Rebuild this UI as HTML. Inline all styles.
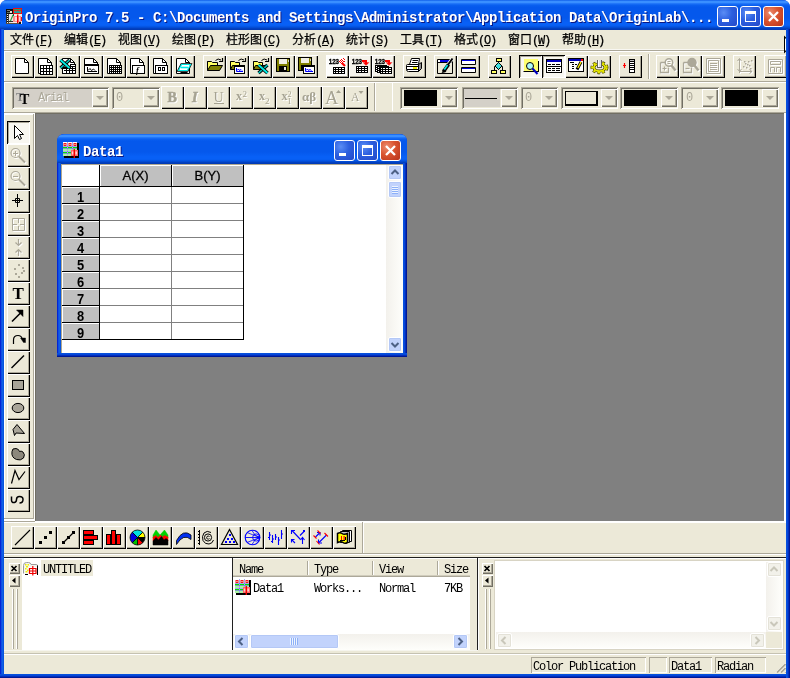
<!DOCTYPE html>
<html lang="zh">
<head>
<meta charset="utf-8">
<title>OriginPro 7.5</title>
<style>
*{margin:0;padding:0;box-sizing:border-box}
html,body{width:790px;height:678px;overflow:hidden;background:#fff}
body{position:relative;font-family:"Liberation Mono","Noto Sans CJK SC",monospace;font-size:12px;color:#000}
.a{position:absolute}
#root{position:absolute;left:0;top:0;width:790px;height:678px;will-change:transform}
#frame{position:absolute;left:0;top:0;width:790px;height:678px;background:#0831D9;border-radius:7px 7px 0 0}
#frameL{left:0;top:29px;width:4px;height:649px;background:linear-gradient(90deg,#0019CF 0,#0831D9 1px,#166AEE 2px,#0855DD 3px,#0855DD 4px)}
#frameR{z-index:5;left:786px;top:29px;width:4px;height:649px;background:linear-gradient(90deg,#0855DD 0,#0441D8 2px,#001DA0 3px,#00138C 4px)}
#frameB{left:0;top:674px;width:790px;height:4px;background:linear-gradient(180deg,#0855DD 0,#0441D8 2px,#001DA0 3px,#00138C 4px)}
.tgrad{background:linear-gradient(180deg,#0A58E6 0,#3A8FFF 4%,#3A8FFF 9%,#1F74F8 12%,#0A60F0 17%,#0558EC 24%,#0558EC 60%,#0860F6 75%,#0860F6 84%,#0452DE 90%,#0240C0 95%,#0238B0 100%)}
#title{left:0;top:0;width:790px;height:30px;border-radius:7px 7px 0 0}
.cap{color:#fff;font-weight:bold;font-size:14px;letter-spacing:-0.4px;white-space:pre;line-height:16px;margin-top:1px;text-shadow:1px 1px 0 #0A1883}
.wb{width:21px;height:21px;border:1px solid #fff;border-radius:3px;background:radial-gradient(circle at 30% 30%,#5A8DF5 0,#2C5FDF 45%,#2448C8 100%)}
.wb.x{background:radial-gradient(circle at 30% 30%,#EC8D6F 0,#D9532F 45%,#B7331A 100%)}
#menu{left:4px;top:30px;width:782px;height:20px;background:#ECE9D8}
.mi{position:absolute;top:3px;height:14px;line-height:14px;font-size:12px;white-space:pre;-webkit-text-stroke:0.25px #000;font-family:"Liberation Sans","Noto Sans CJK SC","WenQuanYi Zen Hei",sans-serif}
.mi u{text-decoration:underline;text-underline-offset:1px}
.mi i{font-style:normal;font-family:"Liberation Mono",monospace;letter-spacing:-1.2px;font-size:12px}
.m{position:absolute;font-family:"Liberation Mono",monospace;font-size:12px;letter-spacing:-1.2px;white-space:pre;line-height:12px}
.btn{position:absolute;width:23px;height:23px;box-shadow:inset 1px 1px 0 #fff,inset -1px -1px 0 #000,inset -2px -2px 0 #ACA899;background:#ECE9D8}
.btn svg{position:absolute;left:0;top:0;width:23px;height:23px}
.btn.dn{box-shadow:inset 1px 1px 0 #000,inset -1px -1px 0 #fff,inset 2px 2px 0 #ACA899;background:#F8F7F1}
.btn.dn svg{left:1px;top:1px}
.combo{position:absolute;height:22px;box-shadow:inset 1px 1px 0 #ACA899,inset -1px -1px 0 #fff,inset 2px 2px 0 #716F64,inset -2px -2px 0 #ECE9D8;background:#ECE9D8}
.dd{position:absolute;right:1px;top:2px;width:16px;height:18px;box-shadow:inset 1px 1px 0 #fff,inset -1px -1px 0 #716F64,inset -2px -2px 0 #ACA899;background:#ECE9D8}
.dd:after{content:"";position:absolute;left:4px;top:7px;border-left:4px solid transparent;border-right:4px solid transparent;border-top:4px solid #ACA899}
.sw{position:absolute;left:4px;top:3px;height:16px;background:#000}
.hl{position:absolute;height:1px}
.vl{position:absolute;width:1px}
</style>
</head>
<body>
<div id="root">
<div id="frame"></div><div id="title" class="a tgrad"></div><div id="frameL" class="a"></div><div id="frameR" class="a"></div><div id="frameB" class="a"></div><div class="a" style="left:4px;top:30px;width:782px;height:644px;background:#ECE9D8"></div>
<svg class="a" style="left:6px;top:8px" width="16" height="16" viewBox="0 0 16 16"><rect x="0" y="6" width="16" height="10" fill="#F4ECE6"/><rect x="0" y="1" width="7" height="5" fill="#101010"/><rect x="1" y="2" width="3" height="1" fill="#808080"/><rect x="4" y="3" width="2" height="2" fill="#E8E0D8"/><rect x="1" y="4" width="3" height="1" fill="#607060"/><rect x="7" y="0" width="9" height="6" fill="#F01010"/><rect x="8" y="1" width="7" height="1.4" fill="#18A070"/><rect x="8" y="3" width="7" height="2" fill="#18A8A0"/><rect x="9.5" y="2" width="1.5" height="1.5" fill="#E03030"/><rect x="12.5" y="2" width="1.5" height="1.5" fill="#E03030"/><rect x="0" y="6" width="1" height="10" fill="#303030"/><rect x="1" y="7" width="1" height="1" fill="#000"/><rect x="1" y="9" width="1" height="1" fill="#000"/><rect x="1" y="11" width="1" height="1" fill="#000"/><rect x="1" y="13" width="1" height="1" fill="#000"/><rect x="2" y="6" width="1" height="9" fill="#404040"/><path d="M4 14L7 7" stroke="#30A040" stroke-width="1.2"/><rect x="3" y="13" width="4" height="1" fill="#303030"/><rect x="7" y="8" width="8" height="6" fill="#F89090"/><rect x="9" y="9" width="2" height="4" fill="#F8D8D8"/><rect x="13" y="9" width="1" height="4" fill="#F8D8D8"/><rect x="11" y="6.5" width="1.4" height="9" fill="#F00000"/><rect x="15" y="9" width="1" height="4" fill="#F01010"/><rect x="7" y="6" width="1" height="2" fill="#206040"/><rect x="13" y="14" width="2" height="2" fill="#101010"/><rect x="0" y="15" width="13" height="1" fill="#605040"/></svg>
<div class="a cap" style="left:25px;top:9px">OriginPro 7.5 - C:\Documents and Settings\Administrator\Application Data\OriginLab\...</div>
<div class="a wb" style="left:717px;top:6px"><div class="a" style="left:4px;top:12px;width:7px;height:3px;background:#fff"></div></div>
<div class="a wb" style="left:740px;top:6px"><div class="a" style="left:4px;top:4px;width:11px;height:11px;border:1px solid #fff;border-top-width:3px"></div></div>
<div class="a wb x" style="left:763px;top:6px"><svg class="a" style="left:0;top:0" width="19" height="19"><path d="M5 5L14 14M14 5L5 14" stroke="#fff" stroke-width="2.3"/></svg></div>
<div id="menu" class="a">
<div class="mi" style="left:6px">文件<i>(<u>F</u>)</i></div>
<div class="mi" style="left:60px">编辑<i>(<u>E</u>)</i></div>
<div class="mi" style="left:114px">视图<i>(<u>V</u>)</i></div>
<div class="mi" style="left:168px">绘图<i>(<u>P</u>)</i></div>
<div class="mi" style="left:222px">柱形图<i>(<u>C</u>)</i></div>
<div class="mi" style="left:288px">分析<i>(<u>A</u>)</i></div>
<div class="mi" style="left:342px">统计<i>(<u>S</u>)</i></div>
<div class="mi" style="left:396px">工具<i>(<u>T</u>)</i></div>
<div class="mi" style="left:450px">格式<i>(<u>O</u>)</i></div>
<div class="mi" style="left:504px">窗口<i>(<u>W</u>)</i></div>
<div class="mi" style="left:558px">帮助<i>(<u>H</u>)</i></div>
</div>
<div class="hl" style="left:4px;top:49px;width:782px;background:#F8F7F2"></div>
<div class="hl" style="left:4px;top:50px;width:782px;background:#ACA899"></div>
<div class="hl" style="left:4px;top:51px;width:782px;background:#fff"></div>
<div class="vl" style="left:4px;top:51px;height:62px;background:#fff"></div>
<div class="hl" style="left:4px;top:81px;width:782px;background:#ACA899"></div>
<div class="hl" style="left:4px;top:82px;width:782px;background:#fff"></div>
<div class="hl" style="left:4px;top:112px;width:782px;background:#ACA899"></div>
<div class="btn " style="left:11px;top:55px"><svg viewBox="0 0 23 23"><path d="M4.5 3.5H13.5L17.5 7.5V18.5H4.5Z" stroke="#000" fill="#fff" stroke-width="1" /><path d="M13.5 3.5V7.5H17.5" stroke="#000" fill="none" stroke-width="1" /></svg></div>
<div class="btn " style="left:34px;top:55px"><svg viewBox="0 0 23 23"><path d="M4.5 3.5H13.5L17.5 7.5V18.5H4.5Z" stroke="#000" fill="#fff" stroke-width="1" /><path d="M13.5 3.5V7.5H17.5" stroke="#000" fill="none" stroke-width="1" /><rect x="6" y="10" width="13" height="10" fill="#000"/><rect x="7" y="11" width="2" height="2" fill="#fff"/><rect x="10" y="11" width="2" height="2" fill="#fff"/><rect x="13" y="11" width="2" height="2" fill="#fff"/><rect x="16" y="11" width="2" height="2" fill="#fff"/><rect x="7" y="14" width="2" height="2" fill="#fff"/><rect x="10" y="14" width="2" height="2" fill="#fff"/><rect x="13" y="14" width="2" height="2" fill="#fff"/><rect x="16" y="14" width="2" height="2" fill="#fff"/><rect x="7" y="17" width="2" height="2" fill="#fff"/><rect x="10" y="17" width="2" height="2" fill="#fff"/><rect x="13" y="17" width="2" height="2" fill="#fff"/><rect x="16" y="17" width="2" height="2" fill="#fff"/></svg></div>
<div class="btn " style="left:57px;top:55px"><svg viewBox="0 0 23 23"><path d="M5.5 3.5H13.5L17.5 7.5V18.5H5.5Z" stroke="#000" fill="#fff" stroke-width="1" /><path d="M13.5 3.5V7.5H17.5" stroke="#000" fill="none" stroke-width="1" /><rect x="5" y="12" width="13" height="7" fill="#000"/><rect x="6" y="13" width="2" height="2" fill="#fff"/><rect x="9" y="13" width="2" height="2" fill="#fff"/><rect x="12" y="13" width="2" height="2" fill="#fff"/><rect x="15" y="13" width="2" height="2" fill="#fff"/><rect x="6" y="16" width="2" height="2" fill="#fff"/><rect x="9" y="16" width="2" height="2" fill="#fff"/><rect x="12" y="16" width="2" height="2" fill="#fff"/><rect x="15" y="16" width="2" height="2" fill="#fff"/><rect x="5" y="12" width="14" height="7" fill="#000"/><rect x="7" y="14" width="2" height="1" fill="#fff"/><rect x="7" y="16" width="2" height="2" fill="#fff"/><rect x="10" y="14" width="2" height="1" fill="#fff"/><rect x="10" y="16" width="2" height="2" fill="#fff"/><rect x="13" y="14" width="2" height="1" fill="#fff"/><rect x="13" y="16" width="2" height="2" fill="#fff"/><rect x="16" y="14" width="2" height="1" fill="#fff"/><rect x="16" y="16" width="2" height="2" fill="#fff"/><rect x="6" y="14" width="1" height="4" fill="#fff"/><rect x="13" y="9" width="6" height="4" fill="#000"/><rect x="14" y="10" width="4" height="1" fill="#fff"/><rect x="14" y="12" width="1" height="1" fill="#fff"/><rect x="16" y="12" width="2" height="1" fill="#fff"/><path d="M12.5 5L3.5 13" stroke="#000" fill="none" stroke-width="3.4" /><path d="M12.5 5L3.5 13" stroke="#00C8C0" fill="none" stroke-width="1.6" /><path d="M3.5 5L12.5 13" stroke="#000" fill="none" stroke-width="3.6" /><path d="M3.5 5L12.5 13" stroke="#00F0E8" fill="none" stroke-width="1.8" /></svg></div>
<div class="btn " style="left:80px;top:55px"><svg viewBox="0 0 23 23"><path d="M4.5 3.5H13.5L17.5 7.5V18.5H4.5Z" stroke="#000" fill="#fff" stroke-width="1" /><path d="M13.5 3.5V7.5H17.5" stroke="#000" fill="none" stroke-width="1" /><rect x="4" y="9" width="15" height="10" fill="#000"/><rect x="5" y="11" width="13" height="7" fill="#fff"/><path d="M7.5 12V16.5H17" stroke="#000" fill="none" stroke-width="1" /><path d="M8 15.5L10 13.5L11.5 15.5L13.5 14L15 15.5" stroke="#000" fill="none" stroke-width="1" /></svg></div>
<div class="btn " style="left:103px;top:55px"><svg viewBox="0 0 23 23"><path d="M4.5 3.5H13.5L17.5 7.5V18.5H4.5Z" stroke="#000" fill="#fff" stroke-width="1" /><path d="M13.5 3.5V7.5H17.5" stroke="#000" fill="none" stroke-width="1" /><rect x="6" y="10" width="13" height="9" fill="#000"/><rect x="7" y="11" width="1" height="1" fill="#fff"/><rect x="9" y="11" width="1" height="1" fill="#fff"/><rect x="11" y="11" width="1" height="1" fill="#fff"/><rect x="13" y="11" width="1" height="1" fill="#fff"/><rect x="15" y="11" width="1" height="1" fill="#fff"/><rect x="17" y="11" width="1" height="1" fill="#fff"/><rect x="7" y="13" width="1" height="1" fill="#fff"/><rect x="9" y="13" width="1" height="1" fill="#fff"/><rect x="11" y="13" width="1" height="1" fill="#fff"/><rect x="13" y="13" width="1" height="1" fill="#fff"/><rect x="15" y="13" width="1" height="1" fill="#fff"/><rect x="17" y="13" width="1" height="1" fill="#fff"/><rect x="7" y="15" width="1" height="1" fill="#fff"/><rect x="9" y="15" width="1" height="1" fill="#fff"/><rect x="11" y="15" width="1" height="1" fill="#fff"/><rect x="13" y="15" width="1" height="1" fill="#fff"/><rect x="15" y="15" width="1" height="1" fill="#fff"/><rect x="17" y="15" width="1" height="1" fill="#fff"/><rect x="7" y="17" width="1" height="1" fill="#fff"/><rect x="9" y="17" width="1" height="1" fill="#fff"/><rect x="11" y="17" width="1" height="1" fill="#fff"/><rect x="13" y="17" width="1" height="1" fill="#fff"/><rect x="15" y="17" width="1" height="1" fill="#fff"/><rect x="17" y="17" width="1" height="1" fill="#fff"/></svg></div>
<div class="btn " style="left:126px;top:55px"><svg viewBox="0 0 23 23"><path d="M4.5 3.5H13.5L17.5 7.5V18.5H4.5Z" stroke="#000" fill="#fff" stroke-width="1" /><path d="M13.5 3.5V7.5H17.5" stroke="#000" fill="none" stroke-width="1" /><rect x="6" y="10" width="13" height="9" fill="#000"/><rect x="7" y="11" width="11" height="7" fill="#fff"/><text x="10" y="17.5" font-family="Liberation Serif, sans-serif" font-size="8.5" font-weight="bold" fill="#000" font-style="italic">f</text></svg></div>
<div class="btn " style="left:149px;top:55px"><svg viewBox="0 0 23 23"><path d="M4.5 3.5H13.5L17.5 7.5V18.5H4.5Z" stroke="#000" fill="#fff" stroke-width="1" /><path d="M13.5 3.5V7.5H17.5" stroke="#000" fill="none" stroke-width="1" /><rect x="6" y="10" width="13" height="9" fill="#000"/><rect x="7" y="11" width="11" height="7" fill="#fff"/><rect x="9" y="12" width="3" height="4" fill="#000"/><rect x="10" y="13" width="1" height="2" fill="#fff"/><rect x="13" y="12" width="3" height="4" fill="#000"/><rect x="14" y="13" width="1" height="2" fill="#fff"/></svg></div>
<div class="btn " style="left:172px;top:55px"><svg viewBox="0 0 23 23"><path d="M4.5 3.5H13.5L17.5 7.5V18.5H4.5Z" stroke="#000" fill="#fff" stroke-width="1" /><path d="M13.5 3.5V7.5H17.5" stroke="#000" fill="none" stroke-width="1" /><path d="M9.5 9.5H18.5L15.5 15.5H6.5Z" stroke="#000" fill="#fff" stroke-width="2.4" /><path d="M9.5 9.5H18.5L15.5 15.5H6.5Z" stroke="#00E8E8" fill="#fff" stroke-width="1.2" /><path d="M9 12.5H16" stroke="#00E8E8" fill="none" stroke-width="1.6" /><path d="M8.5 17.5H15.5" stroke="#000" fill="none" stroke-width="1" /></svg></div>
<div class="btn " style="left:203px;top:55px"><svg viewBox="0 0 23 23"><path d="M4.5 8.5V6.5H8.5L9.5 7.5H14.5V10.5" stroke="#000" fill="#FFFF60" stroke-width="1" /><rect x="5" y="8" width="9" height="7" fill="#FFFF60"/><path d="M4.5 6.5V15.5" stroke="#000" fill="none" stroke-width="1" /><path d="M4.5 15.5L7.5 10.5H19.5L16.5 15.5Z" stroke="#000" fill="#808000" stroke-width="1" /><path d="M12.5 5.5Q15 2.8 18 5" stroke="#000" fill="none" stroke-width="1" /><path d="M16 6.5H19.5V3" stroke="#000" fill="none" stroke-width="1.2" /></svg></div>
<div class="btn " style="left:226px;top:55px"><svg viewBox="0 0 23 23"><path d="M4.5 8.5V6.5H8.5L9.5 7.5H13.5V10.5" stroke="#000" fill="#FFFF60" stroke-width="1" /><rect x="5" y="8" width="8" height="6" fill="#FFFF60"/><path d="M4.5 6.5V14.5" stroke="#000" fill="none" stroke-width="1" /><path d="M4.5 14.5L6.5 10.5H16.5L14.5 14.5Z" stroke="#000" fill="#808000" stroke-width="1" /><path d="M12.5 5.5Q15 2.8 18 5" stroke="#000" fill="none" stroke-width="1" /><path d="M16 6.5H19.5V3" stroke="#000" fill="none" stroke-width="1.2" /><rect x="8" y="10" width="11" height="9" fill="#000"/><rect x="9" y="12" width="9" height="6" fill="#fff"/><path d="M10.5 13V16.5H17" stroke="#00F" fill="none" stroke-width="1" /><path d="M11 15.5L12.5 14L13.5 15.5L15 14.5L16 15.5" stroke="#00F" fill="none" stroke-width="1" /></svg></div>
<div class="btn " style="left:249px;top:55px"><svg viewBox="0 0 23 23"><path d="M4.5 8.5V6.5H8.5L9.5 7.5H13.5V10.5" stroke="#000" fill="#FFFF60" stroke-width="1" /><rect x="5" y="8" width="8" height="6" fill="#FFFF60"/><path d="M4.5 6.5V14.5" stroke="#000" fill="none" stroke-width="1" /><path d="M4.5 14.5L6.5 10.5H16.5L14.5 14.5Z" stroke="#000" fill="#808000" stroke-width="1" /><path d="M12.5 5.5Q15 2.8 18 5" stroke="#000" fill="none" stroke-width="1" /><path d="M16 6.5H19.5V3" stroke="#000" fill="none" stroke-width="1.2" /><path d="M18.5 10L9.5 18" stroke="#000" fill="none" stroke-width="3.4" /><path d="M18.5 10L9.5 18" stroke="#00C8C0" fill="none" stroke-width="1.6" /><path d="M9.5 10L18.5 18" stroke="#000" fill="none" stroke-width="3.6" /><path d="M9.5 10L18.5 18" stroke="#00F0E8" fill="none" stroke-width="1.8" /></svg></div>
<div class="btn " style="left:272px;top:55px"><svg viewBox="0 0 23 23"><g transform="translate(0,0)"><rect x="4" y="3" width="14" height="14" fill="#000"/><rect x="5" y="4" width="12" height="12" fill="#808000"/><rect x="7" y="4" width="8" height="5" fill="#F0EEE4"/><rect x="7" y="11" width="8" height="5" fill="#000"/><rect x="12" y="12" width="2" height="3" fill="#ECE9D8"/><rect x="16" y="5" width="1" height="2" fill="#D8D4C0"/></g></svg></div>
<div class="btn " style="left:295px;top:55px"><svg viewBox="0 0 23 23"><g transform="translate(-1,-1)"><rect x="4" y="3" width="14" height="14" fill="#000"/><rect x="5" y="4" width="12" height="12" fill="#808000"/><rect x="7" y="4" width="8" height="5" fill="#F0EEE4"/><rect x="7" y="11" width="8" height="5" fill="#000"/><rect x="12" y="12" width="2" height="3" fill="#ECE9D8"/><rect x="16" y="5" width="1" height="2" fill="#D8D4C0"/></g><rect x="8" y="10" width="12" height="9" fill="#000"/><rect x="9" y="12" width="10" height="6" fill="#fff"/><path d="M10.5 13V16.5H18" stroke="#00F" fill="none" stroke-width="1" /><path d="M11 15.5L12.5 14L13.5 15.5L15 14.5L16.5 15.5" stroke="#00F" fill="none" stroke-width="1" /></svg></div>
<div class="btn " style="left:326px;top:55px;background:#FDFDFB"><svg viewBox="0 0 23 23"><text x="2.7" y="9" font-family="Liberation Sans, sans-serif" font-size="7" font-weight="bold" fill="#000" stroke="#000" stroke-width="0.3" textLength="10.4" lengthAdjust="spacingAndGlyphs">123</text><path d="M16 8L19 11" stroke="#F00" fill="none" stroke-width="2.2" /><rect x="13" y="6" width="1" height="1" fill="#F00"/><rect x="14" y="5" width="1" height="1" fill="#F00"/><rect x="15" y="4" width="1" height="1" fill="#F00"/><rect x="14" y="7" width="1" height="1" fill="#F00"/><rect x="15" y="6" width="1" height="1" fill="#F00"/><rect x="16" y="5" width="1" height="1" fill="#F00"/><rect x="15" y="8" width="1" height="1" fill="#F00"/><rect x="16" y="7" width="1" height="1" fill="#F00"/><rect x="17" y="6" width="1" height="1" fill="#F00"/><rect x="17" y="3" width="1" height="1" fill="#F00"/><rect x="18" y="4" width="1" height="1" fill="#F00"/><rect x="18" y="6" width="1" height="1" fill="#F00"/><rect x="7" y="12" width="12" height="7" fill="#000"/><rect x="8" y="13" width="1" height="1" fill="#fff"/><rect x="10" y="13" width="2" height="1" fill="#fff"/><rect x="13" y="13" width="2" height="1" fill="#fff"/><rect x="16" y="13" width="2" height="1" fill="#fff"/><rect x="8" y="15" width="1" height="1" fill="#fff"/><rect x="10" y="15" width="2" height="1" fill="#fff"/><rect x="13" y="15" width="2" height="1" fill="#fff"/><rect x="16" y="15" width="2" height="1" fill="#fff"/><rect x="8" y="17" width="1" height="1" fill="#fff"/><rect x="10" y="17" width="2" height="1" fill="#fff"/><rect x="13" y="17" width="2" height="1" fill="#fff"/><rect x="16" y="17" width="2" height="1" fill="#fff"/></svg></div>
<div class="btn " style="left:349px;top:55px;background:#F4F2EA"><svg viewBox="0 0 23 23"><text x="2.7" y="9" font-family="Liberation Sans, sans-serif" font-size="7" font-weight="bold" fill="#000" stroke="#000" stroke-width="0.3" textLength="10.4" lengthAdjust="spacingAndGlyphs">123</text><rect x="13" y="5" width="5" height="2" fill="#F00"/><rect x="16" y="5" width="2" height="3" fill="#F00"/><path d="M14 7.5H20L17 10.5Z" stroke="#F00" fill="#F00" stroke-width="0.3" /><rect x="7" y="11" width="12" height="7" fill="#000"/><rect x="8" y="12" width="1" height="1" fill="#fff"/><rect x="10" y="12" width="2" height="1" fill="#fff"/><rect x="13" y="12" width="2" height="1" fill="#fff"/><rect x="16" y="12" width="2" height="1" fill="#fff"/><rect x="8" y="14" width="1" height="1" fill="#fff"/><rect x="10" y="14" width="2" height="1" fill="#fff"/><rect x="13" y="14" width="2" height="1" fill="#fff"/><rect x="16" y="14" width="2" height="1" fill="#fff"/><rect x="8" y="16" width="1" height="1" fill="#fff"/><rect x="10" y="16" width="2" height="1" fill="#fff"/><rect x="13" y="16" width="2" height="1" fill="#fff"/><rect x="16" y="16" width="2" height="1" fill="#fff"/></svg></div>
<div class="btn " style="left:372px;top:55px;background:#F4F2EA"><svg viewBox="0 0 23 23"><text x="2.7" y="9" font-family="Liberation Sans, sans-serif" font-size="7" font-weight="bold" fill="#000" stroke="#000" stroke-width="0.3" textLength="10.4" lengthAdjust="spacingAndGlyphs">123</text><rect x="13" y="5" width="5" height="2" fill="#F00"/><rect x="16" y="5" width="2" height="3" fill="#F00"/><path d="M14 7.5H20L17 10.5Z" stroke="#F00" fill="#F00" stroke-width="0.3" /><rect x="3" y="10" width="12" height="7" fill="#000"/><rect x="4" y="11" width="1" height="1" fill="#fff"/><rect x="6" y="11" width="2" height="1" fill="#fff"/><rect x="9" y="11" width="2" height="1" fill="#fff"/><rect x="12" y="11" width="2" height="1" fill="#fff"/><rect x="4" y="13" width="1" height="1" fill="#fff"/><rect x="6" y="13" width="2" height="1" fill="#fff"/><rect x="9" y="13" width="2" height="1" fill="#fff"/><rect x="12" y="13" width="2" height="1" fill="#fff"/><rect x="4" y="15" width="1" height="1" fill="#fff"/><rect x="6" y="15" width="2" height="1" fill="#fff"/><rect x="9" y="15" width="2" height="1" fill="#fff"/><rect x="12" y="15" width="2" height="1" fill="#fff"/><rect x="5" y="11" width="12" height="7" fill="#000"/><rect x="6" y="12" width="1" height="1" fill="#fff"/><rect x="8" y="12" width="2" height="1" fill="#fff"/><rect x="11" y="12" width="2" height="1" fill="#fff"/><rect x="14" y="12" width="2" height="1" fill="#fff"/><rect x="6" y="14" width="1" height="1" fill="#fff"/><rect x="8" y="14" width="2" height="1" fill="#fff"/><rect x="11" y="14" width="2" height="1" fill="#fff"/><rect x="14" y="14" width="2" height="1" fill="#fff"/><rect x="6" y="16" width="1" height="1" fill="#fff"/><rect x="8" y="16" width="2" height="1" fill="#fff"/><rect x="11" y="16" width="2" height="1" fill="#fff"/><rect x="14" y="16" width="2" height="1" fill="#fff"/><rect x="8" y="12" width="12" height="7" fill="#000"/><rect x="9" y="13" width="1" height="1" fill="#fff"/><rect x="11" y="13" width="2" height="1" fill="#fff"/><rect x="14" y="13" width="2" height="1" fill="#fff"/><rect x="17" y="13" width="2" height="1" fill="#fff"/><rect x="9" y="15" width="1" height="1" fill="#fff"/><rect x="11" y="15" width="2" height="1" fill="#fff"/><rect x="14" y="15" width="2" height="1" fill="#fff"/><rect x="17" y="15" width="2" height="1" fill="#fff"/><rect x="9" y="17" width="1" height="1" fill="#fff"/><rect x="11" y="17" width="2" height="1" fill="#fff"/><rect x="14" y="17" width="2" height="1" fill="#fff"/><rect x="17" y="17" width="2" height="1" fill="#fff"/></svg></div>
<div class="btn " style="left:403px;top:55px"><svg viewBox="0 0 23 23"><path d="M6.5 9.5L8.5 3.5H16.5L15.5 9.5" stroke="#000" fill="#fff" stroke-width="1" /><path d="M9.5 5.5H15M9 7.5H14.5" stroke="#000" fill="none" stroke-width="1" /><path d="M15.5 9.5L18.5 7.5V13.5L15.5 16.5Z" stroke="#000" fill="#909090" stroke-width="1" /><path d="M4.5 9.5H15.5V16.5H5.5Q3.5 16.5 3.5 14.5V10.5Q3.5 9.5 4.5 9.5Z" stroke="#000" fill="#fff" stroke-width="1" /><path d="M4 11.5H15.5M4 14.5H15.5" stroke="#000" fill="none" stroke-width="1" /><rect x="10" y="12" width="4" height="2" fill="#F0F000"/></svg></div>
<div class="btn " style="left:434px;top:55px"><svg viewBox="0 0 23 23"><path d="M3.5 4.5H18.5V18.5H3.5Z" stroke="#000" fill="#ECE9D8" stroke-width="1" /><rect x="4" y="5" width="2" height="2" fill="#fff"/><rect x="6" y="5" width="9" height="2" fill="#0000E0"/><path d="M4 7.5H18" stroke="#000" fill="none" stroke-width="1" /><path d="M18.5 3.5L13 11" stroke="#fff" fill="none" stroke-width="3.4" /><path d="M18.5 3.5L13.5 10.5" stroke="#000" fill="none" stroke-width="2" /><path d="M14.5 9.5L9.5 16.5" stroke="#000" fill="none" stroke-width="3.6" /><path d="M13.5 10L10 15" stroke="#00E8E8" fill="none" stroke-width="1.6" /><path d="M9.5 14L8 18L12 16.5Z" stroke="#000" fill="#000" stroke-width="0.5" /></svg></div>
<div class="btn " style="left:457px;top:55px"><svg viewBox="0 0 23 23"><path d="M4.5 4.5H18.5V9.5H4.5Z" stroke="#000" fill="#fff" stroke-width="1" /><rect x="5" y="5" width="13" height="1" fill="#0000E0"/><path d="M4.5 12.5H18.5V17.5H4.5Z" stroke="#000" fill="#fff" stroke-width="1" /><rect x="5" y="13" width="13" height="1" fill="#0000E0"/></svg></div>
<div class="btn " style="left:488px;top:55px"><svg viewBox="0 0 23 23"><path d="M10.5 6V15M6.5 15.5V11.5H14.5V15.5" stroke="#000" fill="none" stroke-width="1" /><rect x="8" y="3" width="6" height="4" fill="#000"/><rect x="9" y="4" width="4" height="2" fill="#FFFF60"/><path d="M10.5 7.5L14 11L10.5 14.5L7 11Z" stroke="#000" fill="#40E0E0" stroke-width="1" /><rect x="3" y="15" width="6" height="4" fill="#000"/><rect x="4" y="16" width="4" height="2" fill="#FFFF60"/><rect x="12" y="15" width="6" height="4" fill="#000"/><rect x="13" y="16" width="4" height="2" fill="#FFFF60"/></svg></div>
<div class="btn dn" style="left:519px;top:55px"><svg viewBox="0 0 23 23"><rect x="4" y="3" width="14" height="13" fill="#FFFF70"/><path d="M3.5 15.5H18.5M18.5 5V16" stroke="#000" fill="none" stroke-width="1" /><circle cx="10" cy="10" r="3.5" stroke="#000" fill="#B0F8F8" stroke-width="1"/><path d="M12.5 12.5L17.5 18" stroke="#0000C0" fill="none" stroke-width="2" /></svg></div>
<div class="btn dn" style="left:542px;top:55px"><svg viewBox="0 0 23 23"><rect x="3" y="3" width="16" height="14" fill="#000"/><rect x="4" y="6" width="14" height="10" fill="#fff"/><rect x="4" y="4" width="14" height="2" fill="#0000C0"/><rect x="5" y="8" width="3" height="1" fill="#000"/><rect x="9" y="8" width="3" height="1" fill="#000"/><rect x="13" y="8" width="4" height="1" fill="#000"/><rect x="4" y="10" width="14" height="1" fill="#000"/><rect x="5" y="12" width="3" height="1" fill="#000"/><rect x="9" y="12" width="3" height="1" fill="#000"/><rect x="13" y="12" width="4" height="1" fill="#000"/><rect x="5" y="14" width="3" height="1" fill="#000"/><rect x="9" y="14" width="3" height="1" fill="#000"/><rect x="13" y="14" width="4" height="1" fill="#000"/></svg></div>
<div class="btn " style="left:565px;top:55px"><svg viewBox="0 0 23 23"><rect x="3" y="3" width="16" height="14" fill="#000"/><rect x="4" y="6" width="14" height="10" fill="#fff"/><rect x="4" y="4" width="12" height="2" fill="#0000C0"/><rect x="16" y="4" width="2" height="2" fill="#F00"/><rect x="5" y="7" width="4" height="1" fill="#000"/><rect x="7" y="9" width="2" height="1" fill="#000"/><rect x="10" y="9" width="2" height="1" fill="#000"/><rect x="7" y="11" width="2" height="1" fill="#000"/><rect x="7" y="13" width="2" height="1" fill="#000"/><path d="M16 7L12 14.5" stroke="#000" fill="none" stroke-width="3" /><path d="M16 7L12.8 13" stroke="#FFF000" fill="none" stroke-width="1.4" /></svg></div>
<div class="btn " style="left:588px;top:55px"><svg viewBox="0 0 23 23"><ellipse cx="11.5" cy="12.5" rx="7.3" ry="5" fill="none" stroke="#404000" stroke-width="3.4" stroke-dasharray="2.6 1.9"/><ellipse cx="11.5" cy="12.5" rx="5.6" ry="3.6" fill="none" stroke="#404000" stroke-width="3"/><ellipse cx="11.5" cy="12.5" rx="7.3" ry="5" fill="none" stroke="#E8E800" stroke-width="2" stroke-dasharray="2.2 2.3" stroke-dashoffset="-0.2"/><ellipse cx="11.5" cy="12.5" rx="5.6" ry="3.6" fill="none" stroke="#E8E800" stroke-width="1.8"/><rect x="9" y="5" width="5" height="8" fill="#606060"/><rect x="10" y="5" width="3" height="7" fill="#E0E0E0"/><rect x="10" y="5" width="1" height="7" fill="#fff"/></svg></div>
<div class="btn " style="left:619px;top:55px"><svg viewBox="0 0 23 23"><rect x="10" y="4" width="6" height="14" fill="#000"/><rect x="11" y="5" width="4" height="1" fill="#C0C0C0"/><rect x="11" y="7" width="4" height="1" fill="#fff"/><rect x="11" y="9" width="4" height="1" fill="#fff"/><rect x="11" y="11" width="4" height="1" fill="#fff"/><rect x="11" y="13" width="4" height="1" fill="#fff"/><rect x="11" y="15" width="4" height="2" fill="#fff"/><path d="M5.5 8V13M4 10.5H7" stroke="#F00" fill="none" stroke-width="1.2" /></svg></div>
<div class="btn " style="left:656px;top:55px"><svg viewBox="0 0 23 23"><g transform="translate(1,1)"><path d="M4.5 7.5H9M4.5 7.5V17.5H12.5V12.5" stroke="#fff" fill="none" stroke-width="1.3" /><circle cx="13" cy="7.5" r="3.8" stroke="#fff" fill="none" stroke-width="1.5"/><path d="M11.5 6.5H14.5M11.5 8.5H14.5" stroke="#fff" fill="none" stroke-width="1.2" /><path d="M15.5 10.5L19.5 15.5" stroke="#fff" fill="none" stroke-width="2.6" /><path d="M6.5 13.5H10.5M8.5 11.5V15.5" stroke="#fff" fill="none" stroke-width="1.2" /></g><path d="M4.5 7.5H9M4.5 7.5V17.5H12.5V12.5" stroke="#ACA899" fill="none" stroke-width="1.3" /><circle cx="13" cy="7.5" r="3.8" stroke="#ACA899" fill="none" stroke-width="1.5"/><path d="M11.5 6.5H14.5M11.5 8.5H14.5" stroke="#ACA899" fill="none" stroke-width="1.2" /><path d="M15.5 10.5L19.5 15.5" stroke="#ACA899" fill="none" stroke-width="2.6" /><path d="M6.5 13.5H10.5M8.5 11.5V15.5" stroke="#ACA899" fill="none" stroke-width="1.2" /></svg></div>
<div class="btn " style="left:679px;top:55px"><svg viewBox="0 0 23 23"><g transform="translate(1,1)"><path d="M4.5 7.5H9M4.5 7.5V17.5H12.5V12.5" stroke="#fff" fill="none" stroke-width="1.3" /><circle cx="13" cy="7.5" r="4" stroke="#fff" fill="#fff" stroke-width="1.5"/><path d="M15.5 10.5L19.5 15.5" stroke="#fff" fill="none" stroke-width="2.6" /><path d="M6.5 13.5H10.5" stroke="#fff" fill="none" stroke-width="1.2" /></g><path d="M4.5 7.5H9M4.5 7.5V17.5H12.5V12.5" stroke="#ACA899" fill="none" stroke-width="1.3" /><circle cx="13" cy="7.5" r="4" stroke="#ACA899" fill="#ACA899" stroke-width="1.5"/><path d="M15.5 10.5L19.5 15.5" stroke="#ACA899" fill="none" stroke-width="2.6" /><path d="M6.5 13.5H10.5" stroke="#ACA899" fill="none" stroke-width="1.2" /></svg></div>
<div class="btn " style="left:702px;top:55px"><svg viewBox="0 0 23 23"><g transform="translate(1,1)"><path d="M4.5 3.5H18.5V18.5H4.5Z M6.5 5.5H16.5V16.5H6.5Z" stroke="#fff" fill="none" stroke-width="1" /><path d="M8 8.5H15M8 10.5H15M8 12.5H15M8 14.5H15" stroke="#fff" fill="none" stroke-width="1" /></g><path d="M4.5 3.5H18.5V18.5H4.5Z M6.5 5.5H16.5V16.5H6.5Z" stroke="#ACA899" fill="none" stroke-width="1" /><path d="M8 8.5H15M8 10.5H15M8 12.5H15M8 14.5H15" stroke="#ACA899" fill="none" stroke-width="1" /></svg></div>
<div class="btn " style="left:733px;top:55px"><svg viewBox="0 0 23 23"><g transform="translate(1,1)"><path d="M6.5 4V18M4.5 6L6.5 3.5L8.5 6M4.5 14L6.5 16.5L8.5 14 M6 16.5H19M16.5 14.5L19 16.5L16.5 18.5" stroke="#fff" fill="none" stroke-width="1" /><rect x="10" y="11" width="1.5" height="1.5" fill="#fff"/><rect x="12" y="8" width="1.5" height="1.5" fill="#fff"/><rect x="13" y="12" width="1.5" height="1.5" fill="#fff"/><rect x="15" y="6" width="1.5" height="1.5" fill="#fff"/><rect x="16" y="10" width="1.5" height="1.5" fill="#fff"/><rect x="18" y="5" width="1.5" height="1.5" fill="#fff"/><rect x="17" y="13" width="1.5" height="1.5" fill="#fff"/><rect x="11" y="6" width="1.5" height="1.5" fill="#fff"/><rect x="14" y="9" width="1.5" height="1.5" fill="#fff"/></g><path d="M6.5 4V18M4.5 6L6.5 3.5L8.5 6M4.5 14L6.5 16.5L8.5 14 M6 16.5H19M16.5 14.5L19 16.5L16.5 18.5" stroke="#ACA899" fill="none" stroke-width="1" /><rect x="10" y="11" width="1.5" height="1.5" fill="#ACA899"/><rect x="12" y="8" width="1.5" height="1.5" fill="#ACA899"/><rect x="13" y="12" width="1.5" height="1.5" fill="#ACA899"/><rect x="15" y="6" width="1.5" height="1.5" fill="#ACA899"/><rect x="16" y="10" width="1.5" height="1.5" fill="#ACA899"/><rect x="18" y="5" width="1.5" height="1.5" fill="#ACA899"/><rect x="17" y="13" width="1.5" height="1.5" fill="#ACA899"/><rect x="11" y="6" width="1.5" height="1.5" fill="#ACA899"/><rect x="14" y="9" width="1.5" height="1.5" fill="#ACA899"/></svg></div>
<div class="btn " style="left:764px;top:55px"><svg viewBox="0 0 23 23"><g transform="translate(1,1)"><path d="M4.5 4.5H18.5V18.5H4.5Z" stroke="#fff" fill="none" stroke-width="1" /><path d="M6.5 6.5H16.5V9.5H6.5Z M6.5 17V12.5H10.5V17 M12.5 17V12.5H16.5V17" stroke="#fff" fill="none" stroke-width="1" /></g><path d="M4.5 4.5H18.5V18.5H4.5Z" stroke="#ACA899" fill="none" stroke-width="1" /><path d="M6.5 6.5H16.5V9.5H6.5Z M6.5 17V12.5H10.5V17 M12.5 17V12.5H16.5V17" stroke="#ACA899" fill="none" stroke-width="1" /></svg></div>
<div class="vl" style="left:648px;top:54px;height:25px;background:#ACA899"></div><div class="vl" style="left:649px;top:54px;height:25px;background:#fff"></div>
<div class="combo" style="left:12px;top:87px;width:97px"><div class="a" style="left:2px;top:2px;width:78px;height:18px;background:#D4D0C8"></div><svg class="a" style="left:3px;top:3px" width="18" height="16"><text x="1" y="11" font-family="Liberation Serif, serif" font-weight="bold" font-size="12" fill="#808080">T</text><text x="5" y="14" font-family="Liberation Serif, serif" font-weight="bold" font-size="14" fill="#000">T</text></svg><div class="m" style="left:26px;top:5px;color:#ACA899;text-shadow:1px 1px 0 #fff">Arial</div><div class="dd"></div></div>
<div class="combo" style="left:112px;top:87px;width:48px"><div class="m" style="left:4px;top:5px;color:#ACA899">0</div><div class="dd"></div></div>
<div class="btn" style="left:161px;top:86px"><svg viewBox="0 0 23 23"><text x="7.5" y="17" font-family="Liberation Serif, serif" font-size="14" font-weight="bold" fill="#fff" stroke="#fff" stroke-width="0.5">B</text><text x="6.5" y="16" font-family="Liberation Serif, serif" font-size="14" font-weight="bold" fill="#A6A392" stroke="#A6A392" stroke-width="0.5">B</text></svg></div>
<div class="btn" style="left:184px;top:86px"><svg viewBox="0 0 23 23"><text x="9" y="17" font-family="Liberation Serif, serif" font-size="14" font-weight="bold" fill="#fff" font-style="italic" stroke="#fff" stroke-width="0.5">I</text><text x="8" y="16" font-family="Liberation Serif, serif" font-size="14" font-weight="bold" fill="#A6A392" font-style="italic" stroke="#A6A392" stroke-width="0.5">I</text></svg></div>
<div class="btn" style="left:207px;top:86px"><svg viewBox="0 0 23 23"><text x="7.5" y="17" font-family="Liberation Serif, serif" font-size="14" font-weight="normal" fill="#fff" >U</text><text x="6.5" y="16" font-family="Liberation Serif, serif" font-size="14" font-weight="normal" fill="#A6A392" >U</text><rect x="7" y="17" width="10" height="1" fill="#A6A392"/></svg></div>
<div class="btn" style="left:230px;top:86px"><svg viewBox="0 0 23 23"><text x="7" y="15" font-family="Liberation Serif, serif" font-size="12" font-weight="bold" fill="#fff" >x</text><text x="6" y="14" font-family="Liberation Serif, serif" font-size="12" font-weight="bold" fill="#A6A392" >x</text><text x="13.5" y="12" font-family="Liberation Serif, serif" font-size="9" font-weight="normal" fill="#fff" >2</text><text x="12.5" y="11" font-family="Liberation Serif, serif" font-size="9" font-weight="normal" fill="#A6A392" >2</text></svg></div>
<div class="btn" style="left:253px;top:86px"><svg viewBox="0 0 23 23"><text x="7" y="15" font-family="Liberation Serif, serif" font-size="12" font-weight="bold" fill="#fff" >x</text><text x="6" y="14" font-family="Liberation Serif, serif" font-size="12" font-weight="bold" fill="#A6A392" >x</text><text x="13" y="19" font-family="Liberation Serif, serif" font-size="9" font-weight="normal" fill="#fff" >2</text><text x="12" y="18" font-family="Liberation Serif, serif" font-size="9" font-weight="normal" fill="#A6A392" >2</text></svg></div>
<div class="btn" style="left:276px;top:86px"><svg viewBox="0 0 23 23"><text x="6.5" y="15" font-family="Liberation Serif, serif" font-size="12" font-weight="bold" fill="#fff" >x</text><text x="5.5" y="14" font-family="Liberation Serif, serif" font-size="12" font-weight="bold" fill="#A6A392" >x</text><text x="12.5" y="11.5" font-family="Liberation Serif, serif" font-size="8" font-weight="normal" fill="#fff" >2</text><text x="11.5" y="10.5" font-family="Liberation Serif, serif" font-size="8" font-weight="normal" fill="#A6A392" >2</text><text x="12.5" y="19" font-family="Liberation Serif, serif" font-size="8" font-weight="normal" fill="#fff" >1</text><text x="11.5" y="18" font-family="Liberation Serif, serif" font-size="8" font-weight="normal" fill="#A6A392" >1</text></svg></div>
<div class="btn" style="left:299px;top:86px"><svg viewBox="0 0 23 23"><text x="4" y="16" font-family="Liberation Serif, serif" font-size="13" font-weight="bold" fill="#fff" >αβ</text><text x="3" y="15" font-family="Liberation Serif, serif" font-size="13" font-weight="bold" fill="#A6A392" >αβ</text></svg></div>
<div class="btn" style="left:322px;top:86px"><svg viewBox="0 0 23 23"><text x="4" y="18.5" font-family="Liberation Serif, serif" font-size="18.5" font-weight="normal" fill="#fff" >A</text><text x="3" y="17.5" font-family="Liberation Serif, serif" font-size="18.5" font-weight="normal" fill="#A6A392" >A</text><path d="M14 7L16.5 4L19 7Z" fill="#A6A392"/></svg></div>
<div class="btn" style="left:345px;top:86px"><svg viewBox="0 0 23 23"><text x="7" y="16" font-family="Liberation Serif, serif" font-size="11.5" font-weight="normal" fill="#fff" >A</text><text x="6" y="15" font-family="Liberation Serif, serif" font-size="11.5" font-weight="normal" fill="#A6A392" >A</text><path d="M13.5 5H18.5L16 8Z" fill="#A6A392"/></svg></div>
<div class="vl" style="left:374px;top:83px;height:28px;background:#ACA899"></div><div class="vl" style="left:375px;top:83px;height:28px;background:#fff"></div>
<div class="vl" style="left:392px;top:83px;height:28px;background:#fff"></div>
<div class="combo" style="left:400px;top:87px;width:58px"><div class="sw" style="width:33px"></div><div class="dd"></div></div>
<div class="combo" style="left:462px;top:87px;width:56px"><div class="a" style="left:2px;top:2px;width:36px;height:18px;background:#D4D0C8"></div><div class="a" style="left:3px;top:11px;width:32px;height:1px;background:#000"></div><div class="dd"></div></div>
<div class="combo" style="left:521px;top:87px;width:37px"><div class="m" style="left:4px;top:5px;color:#ACA899">0</div><div class="dd"></div></div>
<div class="combo" style="left:561px;top:87px;width:57px"><div class="a" style="left:4px;top:4px;width:33px;height:15px;border:1px solid #000;border-right-width:2px;border-bottom-width:2px;background:#ECE9D8"></div><div class="dd"></div></div>
<div class="combo" style="left:620px;top:87px;width:58px"><div class="sw" style="width:33px"></div><div class="dd"></div></div>
<div class="combo" style="left:681px;top:87px;width:38px"><div class="m" style="left:5px;top:5px;color:#ACA899">0</div><div class="dd"></div></div>
<div class="combo" style="left:721px;top:87px;width:58px"><div class="sw" style="width:33px"></div><div class="dd"></div></div>
<div class="a" style="left:35px;top:113px;width:751px;height:410px;background:#fff"></div>
<div id="mdi" class="a" style="left:35px;top:113px;width:749px;height:408px;background:#808080;box-shadow:inset 1px 1px 0 #716F64"></div>
<div class="hl" style="left:4px;top:113px;width:30px;height:2px;background:#fff"></div>
<div class="vl" style="left:4px;top:114px;height:405px;background:#fff"></div>
<div class="vl" style="left:33px;top:114px;height:405px;background:#ACA899"></div>
<div class="vl" style="left:34px;top:113px;height:408px;background:#fff"></div>
<div class="hl" style="left:4px;top:518px;width:30px;background:#ACA899"></div>
<div class="hl" style="left:4px;top:519px;width:31px;height:2px;background:#fff"></div>
<div class="hl" style="left:4px;top:521px;width:31px;background:#ACA899"></div>
<div class="hl" style="left:4px;top:522px;width:31px;background:#fff"></div>
<div class="btn dn" style="left:7px;top:121px"><svg viewBox="0 0 23 23"><path d="M6.5 3.5V16.5L9.5 13.5L11.5 17.5L13.5 16.5L11.5 12.5H15.5Z" stroke="#000" fill="#fff" stroke-width="1" stroke-linejoin="miter"/></svg></div>
<div class="btn " style="left:7px;top:144px"><svg viewBox="0 0 23 23"><g transform="translate(1,1)"><circle cx="8.5" cy="9" r="4.5" stroke="#fff" fill="none" stroke-width="1.2"/><path d="M12 12.5L18 18.5" stroke="#fff" fill="none" stroke-width="2" /><path d="M6 9.5H11M8.5 7V12" stroke="#fff" fill="none" stroke-width="1" /></g><circle cx="8.5" cy="9" r="4.5" stroke="#ACA899" fill="none" stroke-width="1.2"/><path d="M12 12.5L18 18.5" stroke="#ACA899" fill="none" stroke-width="2" /><path d="M6 9.5H11M8.5 7V12" stroke="#ACA899" fill="none" stroke-width="1" /></svg></div>
<div class="btn " style="left:7px;top:167px"><svg viewBox="0 0 23 23"><g transform="translate(1,1)"><circle cx="8.5" cy="9" r="4.5" stroke="#fff" fill="none" stroke-width="1.2"/><path d="M12 12.5L18 18.5" stroke="#fff" fill="none" stroke-width="2" /><path d="M6 9.5H11" stroke="#fff" fill="none" stroke-width="1" /></g><circle cx="8.5" cy="9" r="4.5" stroke="#ACA899" fill="none" stroke-width="1.2"/><path d="M12 12.5L18 18.5" stroke="#ACA899" fill="none" stroke-width="2" /><path d="M6 9.5H11" stroke="#ACA899" fill="none" stroke-width="1" /></svg></div>
<div class="btn " style="left:7px;top:190px"><svg viewBox="0 0 23 23"><path d="M10.5 4V17M5 10.5H16" stroke="#000" fill="none" stroke-width="1" /><path d="M8.5 8.5H12.5V12.5H8.5Z" stroke="#000" fill="none" stroke-width="1" /><rect x="10" y="10" width="1" height="1" fill="#000"/></svg></div>
<div class="btn " style="left:7px;top:213px"><svg viewBox="0 0 23 23"><g transform="translate(1,1)"><path d="M5.5 5.5H17.5V17.5H5.5Z M11.5 5.5V10 M11.5 13V17.5 M5.5 11.5H10 M13 11.5H17.5" stroke="#fff" fill="none" stroke-width="1" /></g><path d="M5.5 5.5H17.5V17.5H5.5Z M11.5 5.5V10 M11.5 13V17.5 M5.5 11.5H10 M13 11.5H17.5" stroke="#ACA899" fill="none" stroke-width="1" /></svg></div>
<div class="btn " style="left:7px;top:236px"><svg viewBox="0 0 23 23"><g transform="translate(1,1)"><path d="M11.5 3V9M8.5 6.5L11.5 9.5L14.5 6.5 M11.5 20V14M8.5 16.5L11.5 13.5L14.5 16.5" stroke="#fff" fill="none" stroke-width="1.2" /></g><path d="M11.5 3V9M8.5 6.5L11.5 9.5L14.5 6.5 M11.5 20V14M8.5 16.5L11.5 13.5L14.5 16.5" stroke="#ACA899" fill="none" stroke-width="1.2" /></svg></div>
<div class="btn " style="left:7px;top:259px"><svg viewBox="0 0 23 23"><rect x="11" y="5" width="2" height="2" fill="#ACA899"/><rect x="15" y="8" width="2" height="2" fill="#ACA899"/><rect x="7" y="9" width="2" height="2" fill="#ACA899"/><rect x="14" y="13" width="2" height="2" fill="#ACA899"/><rect x="8" y="14" width="2" height="2" fill="#ACA899"/><rect x="11" y="17" width="2" height="2" fill="#ACA899"/><rect x="16" y="11" width="2" height="2" fill="#ACA899"/></svg></div>
<div class="btn " style="left:7px;top:282px"><svg viewBox="0 0 23 23"><text x="5.5" y="17" font-family="Liberation Serif, sans-serif" font-size="17" font-weight="bold" fill="#000" >T</text></svg></div>
<div class="btn " style="left:7px;top:305px"><svg viewBox="0 0 23 23"><path d="M5 16.5L14 7.5" stroke="#000" fill="none" stroke-width="1.6" /><path d="M9.5 5H16V11.5Z" stroke="#000" fill="#000" stroke-width="0.5" /></svg></div>
<div class="btn " style="left:7px;top:328px"><svg viewBox="0 0 23 23"><path d="M6.5 16V12Q6.5 7.5 11 7.5Q14.5 7.5 15 10.5" stroke="#000" fill="none" stroke-width="1.2" /><path d="M13.5 10H18.5V14.5H16.5Z" stroke="#000" fill="#000" stroke-width="0.4" /></svg></div>
<div class="btn " style="left:7px;top:351px"><svg viewBox="0 0 23 23"><path d="M4.5 17L17 4.5" stroke="#000" fill="none" stroke-width="1.4" /></svg></div>
<div class="btn " style="left:7px;top:374px"><svg viewBox="0 0 23 23"><rect x="5" y="6" width="12" height="10" fill="#000"/><rect x="6" y="7" width="10" height="8" fill="#A8A498"/></svg></div>
<div class="btn " style="left:7px;top:397px"><svg viewBox="0 0 23 23"><ellipse cx="11" cy="11" rx="5.8" ry="4.6" fill="#A8A498" stroke="#000" stroke-width="1"/></svg></div>
<div class="btn " style="left:7px;top:420px"><svg viewBox="0 0 23 23"><path d="M10 4.5L17.5 13.5L9 13L7.5 15.5L6 9.5Z" stroke="#000" fill="#A8A498" stroke-width="1" /></svg></div>
<div class="btn " style="left:7px;top:443px"><svg viewBox="0 0 23 23"><path d="M5 8.5Q5 5 9 5.5Q12 6 12.5 8.5Q14 7.5 16 9Q18.5 11.5 16.5 15Q13.5 18 9.5 16.5Q4 14.5 5 8.5Z" stroke="#000" fill="#8C887C" stroke-width="1" /></svg></div>
<div class="btn " style="left:7px;top:466px"><svg viewBox="0 0 23 23"><path d="M4.5 17.5L8 4.5L12 13.5L18 5.5" stroke="#000" fill="none" stroke-width="1.2" /></svg></div>
<div class="btn " style="left:7px;top:489px"><svg viewBox="0 0 23 23"><path d="M4.5 7.5V11Q4.5 14 7.5 13.5Q9.5 13 9.5 10.5Q9.5 7.5 12.5 7.5Q16 7.5 16 10.5Q16 14 12.5 14" stroke="#000" fill="none" stroke-width="1.5" /></svg></div>
<div class="a" style="left:57px;top:134px;width:350px;height:223px;background:#0831D9;border-radius:7px 7px 0 0"></div>
<div class="a tgrad" style="left:57px;top:134px;width:350px;height:30px;border-radius:7px 7px 0 0"></div>
<div class="vl" style="left:57px;top:163px;height:194px;width:4px;background:linear-gradient(90deg,#0019CF 0,#0831D9 1px,#166AEE 2px,#0855DD 3px,#0855DD 4px)"></div>
<div class="vl" style="left:403px;top:163px;height:194px;width:4px;background:linear-gradient(90deg,#0855DD 0,#0441D8 2px,#001DA0 3px,#00138C 4px)"></div>
<div class="hl" style="left:57px;top:353px;width:350px;height:4px;background:linear-gradient(180deg,#0855DD 0,#0441D8 2px,#001DA0 3px,#00138C 4px)"></div>
<svg class="a" style="left:63px;top:142px" width="16" height="16" viewBox="0 0 16 16"><rect x="1" y="1" width="15" height="15" fill="#000"/><rect x="0" y="0" width="14" height="14" fill="#fff"/><rect x="0.5" y="1" width="3" height="3" fill="#F01818"/><rect x="1.5" y="2" width="1" height="1" fill="#fff"/><rect x="0" y="5" width="4" height="1.4" fill="#00E000"/><rect x="0" y="7" width="4" height="2" fill="#A8F4A0"/><rect x="0" y="10" width="4" height="1.4" fill="#00E000"/><rect x="0" y="12" width="4" height="2" fill="#A8F4A0"/><rect x="5.5" y="1" width="3" height="3" fill="#F01818"/><rect x="6.5" y="2" width="1" height="1" fill="#fff"/><rect x="5" y="5" width="4" height="1.4" fill="#00E000"/><rect x="5" y="7" width="4" height="2" fill="#A8F4A0"/><rect x="5" y="10" width="4" height="1.4" fill="#00E000"/><rect x="5" y="12" width="4" height="2" fill="#A8F4A0"/><rect x="10.5" y="1" width="3" height="3" fill="#F01818"/><rect x="11.5" y="2" width="1" height="1" fill="#fff"/><rect x="10" y="5" width="4" height="1.4" fill="#00E000"/><rect x="10" y="7" width="4" height="2" fill="#A8F4A0"/><rect x="10" y="10" width="4" height="1.4" fill="#00E000"/><rect x="10" y="12" width="4" height="2" fill="#A8F4A0"/><path d="M4.5 0V14M9.5 0V14M0 4.5H14M0 6.5H14M0 9.5H14M0 11.5H14" stroke="#6060E0" stroke-width="0.8" fill="none" opacity="0.7"/><rect x="8" y="8" width="7" height="6" fill="#FF6868"/><rect x="9" y="9.5" width="1.6" height="3" fill="#FFD0D0"/><rect x="12.4" y="9.5" width="1.6" height="3" fill="#FFD0D0"/><rect x="10.6" y="7" width="1.4" height="9" fill="#F00000"/></svg>
<div class="a cap" style="left:83px;top:143px">Data1</div>
<div class="a wb" style="left:334px;top:140px"><div class="a" style="left:4px;top:12px;width:7px;height:3px;background:#fff"></div></div>
<div class="a wb" style="left:357px;top:140px"><div class="a" style="left:4px;top:4px;width:11px;height:11px;border:1px solid #fff;border-top-width:3px"></div></div>
<div class="a wb x" style="left:380px;top:140px"><svg class="a" style="left:0;top:0" width="19" height="19"><path d="M5 5L14 14M14 5L5 14" stroke="#fff" stroke-width="2.3"/></svg></div>
<div class="a" style="left:61px;top:164px;width:342px;height:189px;background:#fff"></div>
<div class="hl" style="left:61px;top:164px;width:342px;background:#B0A890"></div>
<div class="vl" style="left:61px;top:164px;height:189px;background:#B0A890"></div>
<div class="a" style="left:101px;top:166px;width:70px;height:20px;background:#C0C0C0"></div>
<div class="a" style="left:173px;top:166px;width:70px;height:20px;background:#C0C0C0"></div>
<div class="a" style="left:63px;top:188px;width:36px;height:15px;background:#C0C0C0"></div>
<div class="a" style="left:63px;top:205px;width:36px;height:15px;background:#C0C0C0"></div>
<div class="a" style="left:63px;top:222px;width:36px;height:15px;background:#C0C0C0"></div>
<div class="a" style="left:63px;top:239px;width:36px;height:15px;background:#C0C0C0"></div>
<div class="a" style="left:63px;top:256px;width:36px;height:15px;background:#C0C0C0"></div>
<div class="a" style="left:63px;top:273px;width:36px;height:15px;background:#C0C0C0"></div>
<div class="a" style="left:63px;top:290px;width:36px;height:15px;background:#C0C0C0"></div>
<div class="a" style="left:63px;top:307px;width:36px;height:15px;background:#C0C0C0"></div>
<div class="a" style="left:63px;top:324px;width:36px;height:15px;background:#C0C0C0"></div>
<div class="hl" style="left:62px;top:186px;width:182px;background:#000"></div>
<div class="hl" style="left:62px;top:339px;width:182px;background:#000"></div>
<div class="vl" style="left:99px;top:165px;height:175px;background:#000"></div>
<div class="vl" style="left:171px;top:165px;height:22px;background:#000"></div>
<div class="vl" style="left:243px;top:165px;height:175px;background:#000"></div>
<div class="vl" style="left:171px;top:187px;height:152px;background:#808080"></div>
<div class="hl" style="left:62px;top:203px;width:37px;background:#000"></div>
<div class="hl" style="left:100px;top:203px;width:143px;background:#808080"></div>
<div class="hl" style="left:62px;top:220px;width:37px;background:#000"></div>
<div class="hl" style="left:100px;top:220px;width:143px;background:#808080"></div>
<div class="hl" style="left:62px;top:237px;width:37px;background:#000"></div>
<div class="hl" style="left:100px;top:237px;width:143px;background:#808080"></div>
<div class="hl" style="left:62px;top:254px;width:37px;background:#000"></div>
<div class="hl" style="left:100px;top:254px;width:143px;background:#808080"></div>
<div class="hl" style="left:62px;top:271px;width:37px;background:#000"></div>
<div class="hl" style="left:100px;top:271px;width:143px;background:#808080"></div>
<div class="hl" style="left:62px;top:288px;width:37px;background:#000"></div>
<div class="hl" style="left:100px;top:288px;width:143px;background:#808080"></div>
<div class="hl" style="left:62px;top:305px;width:37px;background:#000"></div>
<div class="hl" style="left:100px;top:305px;width:143px;background:#808080"></div>
<div class="hl" style="left:62px;top:322px;width:37px;background:#000"></div>
<div class="hl" style="left:100px;top:322px;width:143px;background:#808080"></div>
<div class="a" style="left:100px;top:165px;width:71px;height:21px;font-family:'Liberation Sans',sans-serif;font-size:13px;line-height:21px;text-align:center;-webkit-text-stroke:0.3px #000">A(X)</div>
<div class="a" style="left:172px;top:165px;width:71px;height:21px;font-family:'Liberation Sans',sans-serif;font-size:13px;line-height:21px;text-align:center;-webkit-text-stroke:0.3px #000">B(Y)</div>
<div class="a" style="left:62px;top:189px;width:37px;height:16px;font-family:'Liberation Sans',sans-serif;font-weight:bold;font-size:14px;line-height:16px;text-align:center;transform:scaleX(0.92)">1</div>
<div class="a" style="left:62px;top:206px;width:37px;height:16px;font-family:'Liberation Sans',sans-serif;font-weight:bold;font-size:14px;line-height:16px;text-align:center;transform:scaleX(0.92)">2</div>
<div class="a" style="left:62px;top:223px;width:37px;height:16px;font-family:'Liberation Sans',sans-serif;font-weight:bold;font-size:14px;line-height:16px;text-align:center;transform:scaleX(0.92)">3</div>
<div class="a" style="left:62px;top:240px;width:37px;height:16px;font-family:'Liberation Sans',sans-serif;font-weight:bold;font-size:14px;line-height:16px;text-align:center;transform:scaleX(0.92)">4</div>
<div class="a" style="left:62px;top:257px;width:37px;height:16px;font-family:'Liberation Sans',sans-serif;font-weight:bold;font-size:14px;line-height:16px;text-align:center;transform:scaleX(0.92)">5</div>
<div class="a" style="left:62px;top:274px;width:37px;height:16px;font-family:'Liberation Sans',sans-serif;font-weight:bold;font-size:14px;line-height:16px;text-align:center;transform:scaleX(0.92)">6</div>
<div class="a" style="left:62px;top:291px;width:37px;height:16px;font-family:'Liberation Sans',sans-serif;font-weight:bold;font-size:14px;line-height:16px;text-align:center;transform:scaleX(0.92)">7</div>
<div class="a" style="left:62px;top:308px;width:37px;height:16px;font-family:'Liberation Sans',sans-serif;font-weight:bold;font-size:14px;line-height:16px;text-align:center;transform:scaleX(0.92)">8</div>
<div class="a" style="left:62px;top:325px;width:37px;height:16px;font-family:'Liberation Sans',sans-serif;font-weight:bold;font-size:14px;line-height:16px;text-align:center;transform:scaleX(0.92)">9</div>
<div class="a" style="left:386px;top:165px;width:17px;height:188px;background:linear-gradient(90deg,#F3F1EC,#FEFEFB)"></div>
<div class="a" style="left:388px;top:165px;width:14px;height:15px;background:#C2D3FC;border:1px solid #fff;border-radius:2px;box-shadow:0 0 0 1px #B4C8F6 inset"><svg class="a" style="left:-1px;top:-1px" width="14" height="15"><path d="M3.5 9L7 5.5L10.5 9" stroke="#4D6185" stroke-width="2" fill="none"/></svg></div>
<div class="a" style="left:388px;top:337px;width:14px;height:15px;background:#C2D3FC;border:1px solid #fff;border-radius:2px;box-shadow:0 0 0 1px #B4C8F6 inset"><svg class="a" style="left:-1px;top:-1px" width="14" height="15"><path d="M3.5 6L7 9.5L10.5 6" stroke="#4D6185" stroke-width="2" fill="none"/></svg></div>
<div class="a" style="left:388px;top:181px;width:14px;height:17px;background:#C2D3FC;border:1px solid #fff;border-radius:2px;box-shadow:0 0 0 1px #B4C8F6 inset"><div class="a" style="left:3px;top:4px;width:6px;height:1px;background:#EEF4FE;box-shadow:0 1px 0 #8CB0F8,0 2px 0 #EEF4FE,0 3px 0 #8CB0F8,0 4px 0 #EEF4FE,0 5px 0 #8CB0F8,0 6px 0 #EEF4FE,0 7px 0 #8CB0F8"></div></div>
<div class="btn " style="left:11px;top:526px"><svg viewBox="0 0 23 23"><path d="M4 19L19 4" stroke="#000" fill="none" stroke-width="1.1" /></svg></div>
<div class="btn " style="left:34px;top:526px"><svg viewBox="0 0 23 23"><rect x="5" y="15" width="3" height="3" fill="#000"/><rect x="10" y="10" width="3" height="3" fill="#000"/><rect x="15" y="5" width="3" height="3" fill="#000"/></svg></div>
<div class="btn " style="left:57px;top:526px"><svg viewBox="0 0 23 23"><path d="M6 17L17 6" stroke="#000" fill="none" stroke-width="1.3" /><rect x="5" y="15" width="3" height="3" fill="#000"/><rect x="10" y="10" width="3" height="3" fill="#000"/><rect x="15" y="5" width="3" height="3" fill="#000"/></svg></div>
<div class="btn " style="left:80px;top:526px"><svg viewBox="0 0 23 23"><rect x="3" y="4" width="11" height="15" fill="#000"/><rect x="3" y="9" width="15" height="5" fill="#000"/><rect x="4" y="5" width="9" height="3" fill="#F00"/><rect x="4" y="10" width="13" height="3" fill="#F00"/><rect x="4" y="15" width="9" height="3" fill="#F00"/></svg></div>
<div class="btn " style="left:103px;top:526px"><svg viewBox="0 0 23 23"><rect x="3" y="8" width="15" height="11" fill="#000"/><rect x="8" y="4" width="5" height="15" fill="#000"/><rect x="4" y="9" width="3" height="9" fill="#F00"/><rect x="9" y="5" width="3" height="13" fill="#F00"/><rect x="14" y="9" width="3" height="9" fill="#F00"/></svg></div>
<div class="btn " style="left:126px;top:526px"><svg viewBox="0 0 23 23"><path d="M11.5 11.5L6.20 6.20A7.5 7.5 0 0 1 16.80 6.20Z" fill="#00E0E0" stroke="#000" stroke-width="0.8"/><path d="M11.5 11.5L16.80 6.20A7.5 7.5 0 0 1 19.00 11.50Z" fill="#FFFF00" stroke="#000" stroke-width="0.8"/><path d="M11.5 11.5L19.00 11.50A7.5 7.5 0 0 1 16.80 16.80Z" fill="#000" stroke="#000" stroke-width="0.8"/><path d="M11.5 11.5L16.80 16.80A7.5 7.5 0 0 1 11.50 19.00Z" fill="#F00" stroke="#000" stroke-width="0.8"/><path d="M11.5 11.5L11.50 19.00A7.5 7.5 0 0 1 6.20 16.80Z" fill="#00C000" stroke="#000" stroke-width="0.8"/><path d="M11.5 11.5L6.20 16.80A7.5 7.5 0 0 1 6.20 6.20Z" fill="#0000E0" stroke="#000" stroke-width="0.8"/></svg></div>
<div class="btn " style="left:149px;top:526px"><svg viewBox="0 0 23 23"><path d="M4 9L7 4L11 9L15.5 4L19 9V12H4Z" stroke="#00D000" fill="#00D000" stroke-width="0.5" /><path d="M4 11L7 9.5L9 11.5L11.5 9L13.5 11L15.5 9.5L19 11V15H4Z" stroke="#F00" fill="#F00" stroke-width="0.5" /><path d="M4 19V15L7 11.5L9.5 14L12.5 10.5L15 14L17 12.5L19 14V19Z" stroke="#000" fill="#000" stroke-width="0.5" /></svg></div>
<div class="btn " style="left:172px;top:526px"><svg viewBox="0 0 23 23"><path d="M4.5 14.5Q11 2.5 19 9V13.5Q11.5 7 4.5 18.5Z" stroke="#000" fill="#0030F0" stroke-width="0.8" /></svg></div>
<div class="btn " style="left:195px;top:526px"><svg viewBox="0 0 23 23"><path d="M4.5 4V19" stroke="#000" fill="none" stroke-width="1" /><path d="M3 5.5H5M3 8.5H5M3 11.5H5M3 14.5H5M3 17.5H5" stroke="#000" fill="none" stroke-width="1" /><path d="M16 6.5Q12 4 9 7Q6.5 10.5 8 14.5Q10 18.5 14 18Q17.5 17.5 18.5 14" stroke="#000" fill="none" stroke-width="1" /><circle cx="13" cy="11.5" r="3.6" stroke="#000" fill="none" stroke-width="1"/><path d="M14.5 10.5Q13 9.5 12 10.5Q11 12 12.3 13Q13.5 13.5 14.5 12.5" stroke="#000" fill="none" stroke-width="0.9" /></svg></div>
<div class="btn " style="left:218px;top:526px"><svg viewBox="0 0 23 23"><path d="M11.5 3.5L19.5 18.5H3.5Z" stroke="#000" fill="none" stroke-width="1.2" /><rect x="11" y="8" width="2" height="2" fill="#00F"/><rect x="9" y="12" width="2" height="2" fill="#00F"/><rect x="13" y="12" width="2" height="2" fill="#00F"/><rect x="7" y="15" width="2" height="2" fill="#00F"/><rect x="11" y="15" width="2" height="2" fill="#00F"/><rect x="15" y="15" width="2" height="2" fill="#00F"/></svg></div>
<div class="btn " style="left:241px;top:526px"><svg viewBox="0 0 23 23"><circle cx="11.5" cy="11.5" r="7.3" stroke="#00F" fill="none" stroke-width="1.1"/><path d="M4 11.5H19" stroke="#00F" fill="none" stroke-width="0.9" /><circle cx="15.2" cy="11.5" r="3.6" stroke="#00F" fill="none" stroke-width="0.9"/><path d="M19 11.5Q13 10 11 4.5M19 11.5Q13 13 11 18.5M19 11.5Q11 8.5 6 6.5M19 11.5Q11 14.5 6 16.5" stroke="#00F" fill="none" stroke-width="0.8" /><rect x="16.5" y="10.5" width="2" height="2" fill="#00F"/></svg></div>
<div class="btn " style="left:264px;top:526px"><svg viewBox="0 0 23 23"><path d="M5.5 6V14M8.5 9V17M11.5 8V14M14.5 11V19M17.5 4V13M5.5 9H7M8.5 13H10M11.5 11H13M14.5 14H16M17.5 8H19M4 11.5H5.5M7 15.5H8.5" stroke="#00F" fill="none" stroke-width="1.1" /></svg></div>
<div class="btn " style="left:287px;top:526px"><svg viewBox="0 0 23 23"><path d="M5 4.5L13.5 13.5M13 9.5L17 5.5M8 17L5 14M15.5 18V12" stroke="#00F" fill="none" stroke-width="1.1" /><path d="M4.5 8V4.5H8M4.5 16.5V13.5H7.5M13.5 14L15.5 11.5L17.5 14" stroke="#00F" fill="none" stroke-width="1.1" /><rect x="16" y="4" width="2" height="2" fill="#00F"/></svg></div>
<div class="btn " style="left:310px;top:526px"><svg viewBox="0 0 23 23"><path d="M5.5 11L9.5 7M16.5 9L9 16.5" stroke="#00F" fill="none" stroke-width="1.1" /><path d="M7 6.5H10V9.5M8.5 13.5V17H12" stroke="#00F" fill="none" stroke-width="1.1" /><path d="M3.5 9.5L6.5 12.5M7.5 4.5L10.5 7.5M14.5 7L18 10.5M6.5 15L9.5 18.5" stroke="#F00" fill="none" stroke-width="1.1" /></svg></div>
<div class="btn " style="left:333px;top:526px"><svg viewBox="0 0 23 23"><path d="M9.5 4.5H18.5V15.5H9.5Z" stroke="#000" fill="#fff" stroke-width="1" /><path d="M7.5 5.5H16.5V16.5H7.5Z" stroke="#000" fill="#C8C8C8" stroke-width="1" /><path d="M4.5 7.5Q7 6 9 7.5T14.5 7.5V16.5Q12 18 10 16.5T4.5 16.5Z" stroke="#000" fill="#FFFF00" stroke-width="1.5" /><rect x="8" y="10" width="1" height="4" fill="#F00"/><rect x="10.5" y="10" width="1.2" height="4" fill="#F00"/><rect x="7" y="14" width="5" height="1" fill="#000"/><rect x="12" y="11" width="1" height="3" fill="#000"/></svg></div>
<div class="vl" style="left:362px;top:522px;height:31px;background:#ACA899"></div><div class="vl" style="left:363px;top:522px;height:31px;background:#fff"></div>
<div class="hl" style="left:4px;top:553px;width:782px;background:#ACA899"></div>
<div class="hl" style="left:4px;top:554px;width:782px;background:#fff"></div>
<div class="hl" style="left:4px;top:557px;width:782px;background:#202020"></div>
<div class="hl" style="left:4px;top:558px;width:782px;background:#fff"></div>
<div class="a" style="left:9px;top:563px;width:11px;height:11px;box-shadow:inset 1px 1px 0 #fff,inset -1px -1px 0 #716F64,inset -2px -2px 0 #ACA899"><svg class="a" width="11" height="11"><path d="M2.5 3L7.5 8M7.5 3L2.5 8" stroke="#000" stroke-width="1.7"/></svg></div>
<div class="a" style="left:9px;top:575px;width:11px;height:12px;box-shadow:inset 1px 1px 0 #fff,inset -1px -1px 0 #716F64,inset -2px -2px 0 #ACA899"><svg class="a" width="11" height="12"><path d="M6.5 2.5V8.5L3 5.5Z" fill="#000"/></svg></div>
<div class="vl" style="left:12px;top:589px;height:60px;background:#fff"></div><div class="vl" style="left:13px;top:589px;height:60px;background:#ACA899"></div>
<div class="vl" style="left:16px;top:589px;height:60px;background:#fff"></div><div class="vl" style="left:17px;top:589px;height:60px;background:#ACA899"></div>
<div class="a" style="left:22px;top:559px;width:210px;height:91px;background:#fff"></div>
<div class="vl" style="left:232px;top:558px;height:92px;background:#202020"></div>
<svg class="a" style="left:22px;top:561px" width="17" height="15" viewBox="0 0 17 15"><path d="M1.5 12.5V4.5Q1.5 1.5 4.5 1.5H6.5Q8.5 1.5 9 3.5H14.5Q15.5 3.5 15.5 5V13.5" fill="#F4F4F0" stroke="#9C9C9C"/><rect x="3" y="3" width="1.5" height="1.5" fill="#F0F000"/><rect x="5.5" y="3" width="1.5" height="1.5" fill="#F0F000"/><rect x="4" y="5" width="2" height="1.5" fill="#F0F000"/><rect x="3" y="7" width="1.5" height="1.5" fill="#F0F000"/><rect x="5" y="8.5" width="1.5" height="1.5" fill="#F0F000"/><rect x="3.5" y="10" width="2" height="1.5" fill="#F0F000"/><rect x="7" y="6" width="8" height="8" fill="#fff"/><path d="M7.5 7V12.5M14 7V12.5M7 7.5H14.5M7 10H14.5M7 12.5H14.5M10.8 5V14.5" stroke="#F00000" fill="none" stroke-width="1.2"/><path d="M15.5 4.5V14" stroke="#000"/><path d="M3 13.5H6" stroke="#000"/></svg>
<div class="a" style="left:41px;top:560px;width:52px;height:16px;background:#ECE9D8"></div>
<div class="m" style="left:43px;top:564px">UNTITLED</div>
<div class="a" style="left:233px;top:559px;width:237px;height:91px;background:#fff"></div>
<div class="a" style="left:233px;top:559px;width:237px;height:18px;background:#ECE9D8;box-shadow:inset 0 -1px 0 #ACA899,inset 0 -2px 0 #D0CCBC"></div>
<div class="vl" style="left:307px;top:561px;height:14px;background:#ACA899"></div><div class="vl" style="left:308px;top:561px;height:14px;background:#fff"></div>
<div class="vl" style="left:372px;top:561px;height:14px;background:#ACA899"></div><div class="vl" style="left:373px;top:561px;height:14px;background:#fff"></div>
<div class="vl" style="left:437px;top:561px;height:14px;background:#ACA899"></div><div class="vl" style="left:438px;top:561px;height:14px;background:#fff"></div>
<div class="m" style="left:239px;top:564px">Name</div>
<div class="m" style="left:314px;top:564px">Type</div>
<div class="m" style="left:379px;top:564px">View</div>
<div class="m" style="left:444px;top:564px">Size</div>
<svg class="a" style="left:235px;top:579px" width="16" height="16" viewBox="0 0 16 16"><rect x="1" y="1" width="15" height="15" fill="#000"/><rect x="0" y="0" width="14" height="14" fill="#fff"/><rect x="0.5" y="1" width="3" height="3" fill="#F01818"/><rect x="1.5" y="2" width="1" height="1" fill="#fff"/><rect x="0" y="5" width="4" height="1.4" fill="#00E000"/><rect x="0" y="7" width="4" height="2" fill="#A8F4A0"/><rect x="0" y="10" width="4" height="1.4" fill="#00E000"/><rect x="0" y="12" width="4" height="2" fill="#A8F4A0"/><rect x="5.5" y="1" width="3" height="3" fill="#F01818"/><rect x="6.5" y="2" width="1" height="1" fill="#fff"/><rect x="5" y="5" width="4" height="1.4" fill="#00E000"/><rect x="5" y="7" width="4" height="2" fill="#A8F4A0"/><rect x="5" y="10" width="4" height="1.4" fill="#00E000"/><rect x="5" y="12" width="4" height="2" fill="#A8F4A0"/><rect x="10.5" y="1" width="3" height="3" fill="#F01818"/><rect x="11.5" y="2" width="1" height="1" fill="#fff"/><rect x="10" y="5" width="4" height="1.4" fill="#00E000"/><rect x="10" y="7" width="4" height="2" fill="#A8F4A0"/><rect x="10" y="10" width="4" height="1.4" fill="#00E000"/><rect x="10" y="12" width="4" height="2" fill="#A8F4A0"/><path d="M4.5 0V14M9.5 0V14M0 4.5H14M0 6.5H14M0 9.5H14M0 11.5H14" stroke="#6060E0" stroke-width="0.8" fill="none" opacity="0.7"/><rect x="8" y="8" width="7" height="6" fill="#FF6868"/><rect x="9" y="9.5" width="1.6" height="3" fill="#FFD0D0"/><rect x="12.4" y="9.5" width="1.6" height="3" fill="#FFD0D0"/><rect x="10.6" y="7" width="1.4" height="9" fill="#F00000"/></svg>
<div class="m" style="left:253px;top:583px">Data1</div>
<div class="m" style="left:314px;top:583px">Works...</div>
<div class="m" style="left:379px;top:583px">Normal</div>
<div class="m" style="left:444px;top:583px">7KB</div>
<div class="a" style="left:233px;top:634px;width:237px;height:16px;background:linear-gradient(180deg,#F3F1EC,#FEFEFB)"></div>
<div class="a" style="left:234px;top:634px;width:15px;height:15px;background:#C2D3FC;border:1px solid #fff;border-radius:2px;box-shadow:0 0 0 1px #B4C8F6 inset"><svg class="a" style="left:-1px;top:-1px" width="15" height="15"><path d="M8.5 4L5 7.5L8.5 11" stroke="#4D6185" stroke-width="2" fill="none"/></svg></div>
<div class="a" style="left:453px;top:634px;width:15px;height:15px;background:#C2D3FC;border:1px solid #fff;border-radius:2px;box-shadow:0 0 0 1px #B4C8F6 inset"><svg class="a" style="left:-1px;top:-1px" width="15" height="15"><path d="M5.5 4L9 7.5L5.5 11" stroke="#4D6185" stroke-width="2" fill="none"/></svg></div>
<div class="a" style="left:250px;top:634px;width:89px;height:15px;background:#C2D3FC;border:1px solid #fff;border-radius:2px;box-shadow:0 0 0 1px #B4C8F6 inset"><div class="a" style="left:39px;top:3px;width:1px;height:7px;background:#EEF4FE;box-shadow:1px 0 0 #8CB0F8,2px 0 0 #EEF4FE,3px 0 0 #8CB0F8,4px 0 0 #EEF4FE,5px 0 0 #8CB0F8,6px 0 0 #EEF4FE,7px 0 0 #8CB0F8"></div></div>
<div class="hl" style="left:4px;top:650px;width:474px;background:#F6F5EE"></div>
<div class="vl" style="left:477px;top:558px;height:92px;background:#202020"></div>
<div class="vl" style="left:478px;top:558px;height:92px;background:#fff"></div>
<div class="a" style="left:482px;top:563px;width:11px;height:11px;box-shadow:inset 1px 1px 0 #fff,inset -1px -1px 0 #716F64,inset -2px -2px 0 #ACA899"><svg class="a" width="11" height="11"><path d="M2.5 3L7.5 8M7.5 3L2.5 8" stroke="#000" stroke-width="1.7"/></svg></div>
<div class="a" style="left:482px;top:575px;width:11px;height:12px;box-shadow:inset 1px 1px 0 #fff,inset -1px -1px 0 #716F64,inset -2px -2px 0 #ACA899"><svg class="a" width="11" height="12"><path d="M6.5 2.5V8.5L3 5.5Z" fill="#000"/></svg></div>
<div class="vl" style="left:485px;top:589px;height:60px;background:#fff"></div><div class="vl" style="left:486px;top:589px;height:60px;background:#ACA899"></div>
<div class="vl" style="left:489px;top:589px;height:60px;background:#fff"></div><div class="vl" style="left:490px;top:589px;height:60px;background:#ACA899"></div>
<div class="a" style="left:495px;top:561px;width:288px;height:88px;background:#fff;box-shadow:0 0 0 1px #D8D4C4"></div>
<div class="a" style="left:766px;top:562px;width:16px;height:70px;background:linear-gradient(90deg,#F3F1EC,#FEFEFB)"></div>
<div class="a" style="left:496px;top:632px;width:270px;height:16px;background:linear-gradient(180deg,#F3F1EC,#FEFEFB)"></div>
<div class="a" style="left:766px;top:632px;width:16px;height:16px;background:#ECE9D8"></div>
<div class="a" style="left:767px;top:562px;width:15px;height:15px;background:#F2F1EA;border:1px solid #fff;border-radius:2px;box-shadow:0 0 0 1px #E4E2D8 inset"><svg class="a" style="left:-1px;top:-1px" width="15" height="15"><path d="M3.5 9L7 5.5L10.5 9" stroke="#C9C7BA" stroke-width="2" fill="none"/></svg></div>
<div class="a" style="left:767px;top:616px;width:15px;height:15px;background:#F2F1EA;border:1px solid #fff;border-radius:2px;box-shadow:0 0 0 1px #E4E2D8 inset"><svg class="a" style="left:-1px;top:-1px" width="15" height="15"><path d="M3.5 6L7 9.5L10.5 6" stroke="#C9C7BA" stroke-width="2" fill="none"/></svg></div>
<div class="a" style="left:497px;top:633px;width:15px;height:15px;background:#F2F1EA;border:1px solid #fff;border-radius:2px;box-shadow:0 0 0 1px #E4E2D8 inset"><svg class="a" style="left:-1px;top:-1px" width="15" height="15"><path d="M8.5 4L5 7.5L8.5 11" stroke="#C9C7BA" stroke-width="2" fill="none"/></svg></div>
<div class="a" style="left:750px;top:633px;width:15px;height:15px;background:#F2F1EA;border:1px solid #fff;border-radius:2px;box-shadow:0 0 0 1px #E4E2D8 inset"><svg class="a" style="left:-1px;top:-1px" width="15" height="15"><path d="M5.5 4L9 7.5L5.5 11" stroke="#C9C7BA" stroke-width="2" fill="none"/></svg></div>
<div class="hl" style="left:4px;top:653px;width:782px;background:#C5C2B2"></div>
<div class="hl" style="left:4px;top:654px;width:782px;background:#fff"></div>
<div class="a" style="left:531px;top:657px;width:115px;height:16px;box-shadow:inset 1px 1px 0 #ACA899,inset -1px -1px 0 #fff"><div class="m" style="left:2px;top:4px">Color Publication</div></div>
<div class="a" style="left:649px;top:657px;width:18px;height:16px;box-shadow:inset 1px 1px 0 #ACA899,inset -1px -1px 0 #fff"><div class="m" style="left:2px;top:4px"></div></div>
<div class="a" style="left:669px;top:657px;width:43px;height:16px;box-shadow:inset 1px 1px 0 #ACA899,inset -1px -1px 0 #fff"><div class="m" style="left:2px;top:4px">Data1</div></div>
<div class="a" style="left:715px;top:657px;width:51px;height:16px;box-shadow:inset 1px 1px 0 #ACA899,inset -1px -1px 0 #fff"><div class="m" style="left:2px;top:4px">Radian</div></div>
<svg class="a" style="left:773px;top:660px" width="13" height="13"><path d="M12.5 3L3 12.5M12.5 7L7 12.5M12.5 11L11 12.5" stroke="#fff" stroke-width="1"/><path d="M12.5 4L4 12.5M12.5 8L8 12.5M12.5 12L12 12.5" stroke="#A8A494" stroke-width="1.6"/></svg>
<svg class="a" style="left:782px;top:34px" width="8" height="22"><path d="M2 1.5V19.5L6 15.5L8 19V7.5Z" fill="#000"/><path d="M3 4V17L6 14L8 17V9Z" fill="#fff"/></svg>
</div>
</body>
</html>
